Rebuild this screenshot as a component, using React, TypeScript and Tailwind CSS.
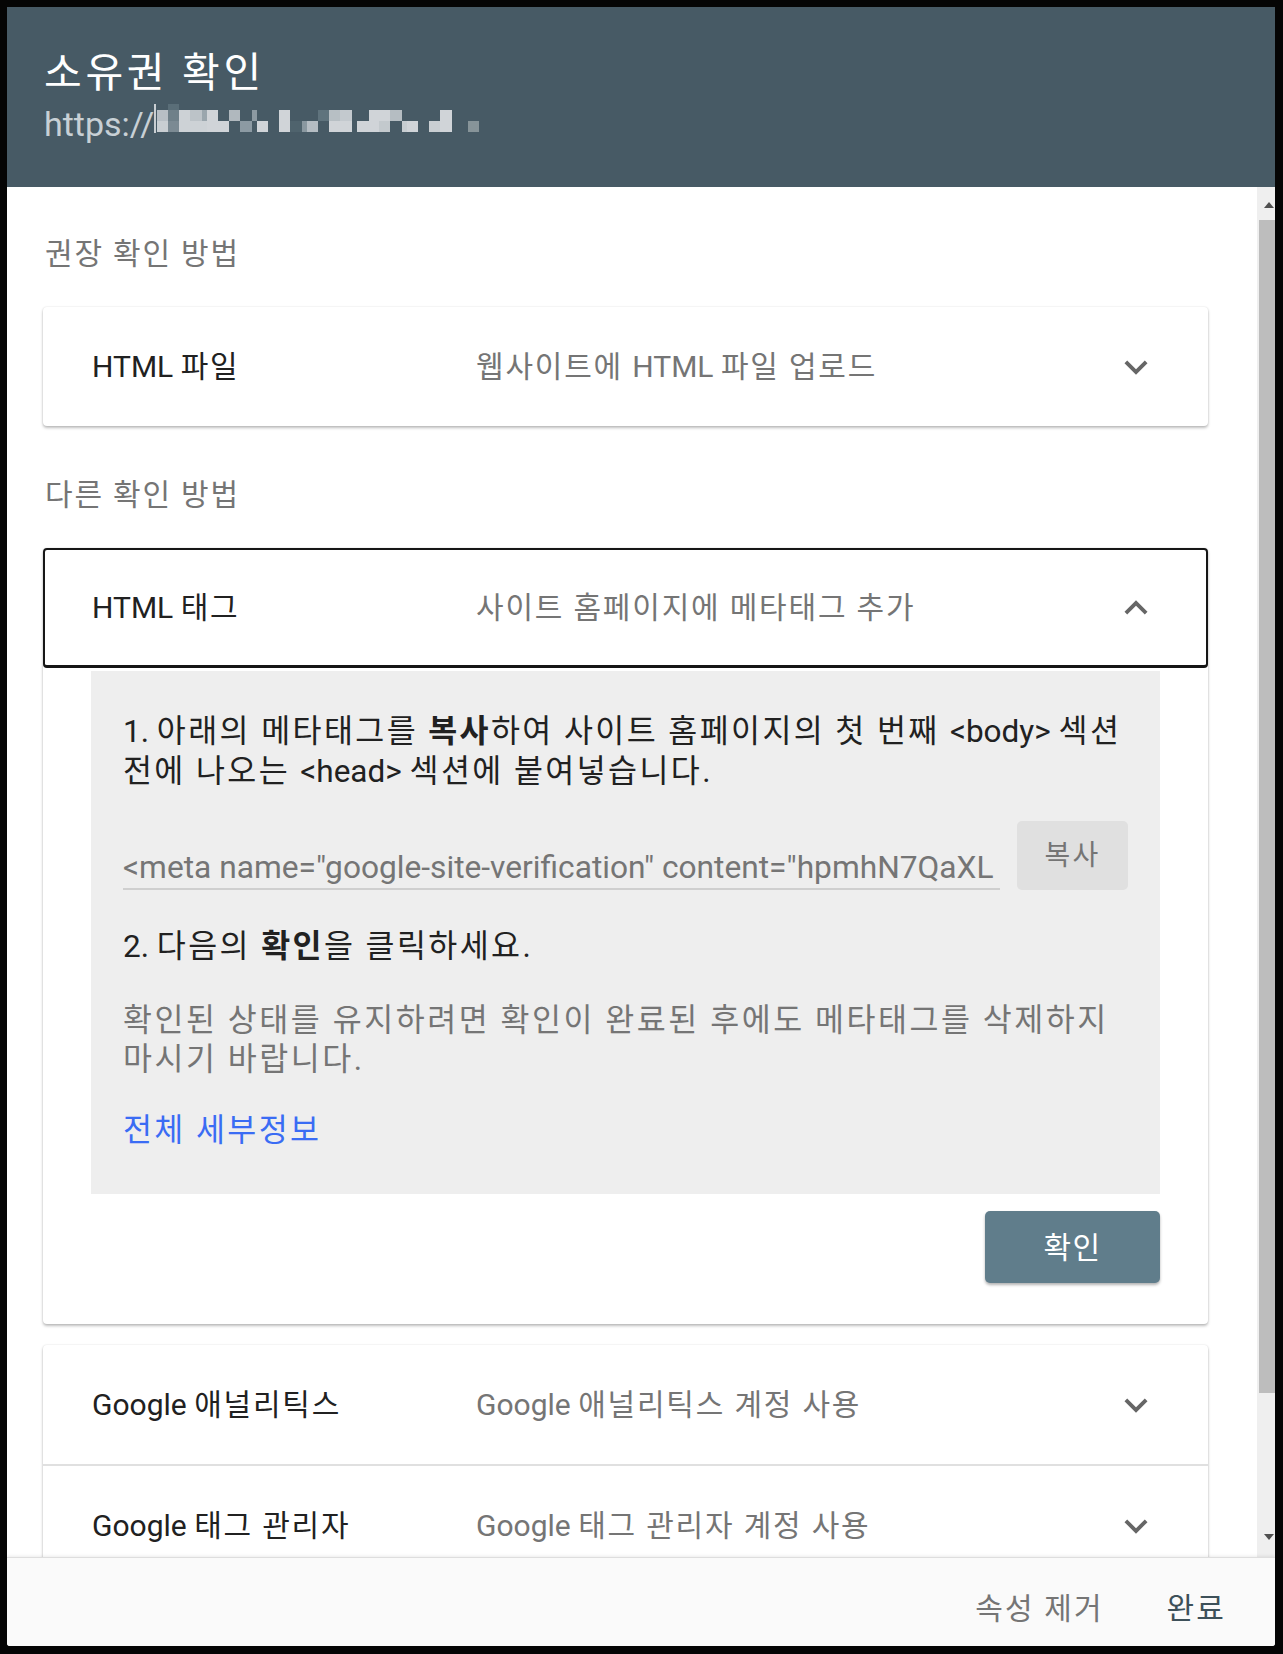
import React from "react";

const Down = () => (
  <svg width="46" height="46" viewBox="0 0 24 24" fill="#666666" className="shrink-0">
    <path d="M16.59 8.59L12 13.17 7.41 8.59 6 10l6 6 6-6z" />
  </svg>
);
const Up = () => (
  <svg width="46" height="46" viewBox="0 0 24 24" fill="#666666" className="shrink-0">
    <path d="M12 8l-6 6 1.41 1.41L12 10.83l4.59 4.58L18 14z" />
  </svg>
);

/* Hangul runs get a little extra tracking to match the reference's looser Korean face */
function K({ t, tr }: { t: string; tr: string }) {
  const parts = t.split(/([가-힣][가-힣 ]*)/);
  return (
    <>
      {parts.map((p, i) =>
        /[가-힣]/.test(p) ? (
          <span key={i} className={tr}>
            {p}
          </span>
        ) : (
          <React.Fragment key={i}>{p}</React.Fragment>
        )
      )}
    </>
  );
}

const ROW_TR = "tracking-[0.06em]";
const BODY_TR = "tracking-[0.076em]";

type R = [number, number, number, number, string];
const blocks: R[] = [
  [157, 3, 103, 30, "#c9ced2"],
  [161, 11, 110, 11, "#b8bfc5"],
  [161, 11, 121, 11, "#c9ced2"],
  [172, 11, 98, 12, "#5a6e78"],
  [172, 11, 110, 11, "#6f8089"],
  [172, 11, 121, 11, "#7b8a93"],
  [183, 11, 110, 22, "#cdd2d6"],
  [194, 12, 110, 11, "#bcc3c8"],
  [194, 12, 121, 11, "#cdd2d6"],
  [206, 5, 110, 11, "#9aa6ad"],
  [206, 5, 121, 11, "#cdd2d6"],
  [211, 11, 110, 22, "#d0d4d8"],
  [222, 11, 121, 11, "#d0d4d8"],
  [233, 11, 110, 11, "#b0b8be"],
  [244, 12, 121, 11, "#8c9aa3"],
  [256, 5, 110, 11, "#8d9aa2"],
  [261, 11, 121, 11, "#d0d4d8"],
  [283, 11, 110, 22, "#d0d4d8"],
  [294, 12, 121, 11, "#4f636d"],
  [306, 5, 121, 11, "#8a98a0"],
  [311, 11, 121, 11, "#b5bdc3"],
  [322, 11, 110, 11, "#5f737d"],
  [333, 11, 110, 11, "#b7bfc4"],
  [333, 11, 121, 11, "#d0d4d8"],
  [344, 12, 110, 11, "#c3c9ce"],
  [344, 12, 121, 11, "#d0d4d8"],
  [361, 12, 121, 11, "#d0d4d8"],
  [373, 10, 110, 22, "#d0d4d8"],
  [383, 11, 110, 11, "#d0d4d8"],
  [383, 11, 121, 11, "#c3c9cd"],
  [394, 12, 110, 11, "#b5bdc2"],
  [406, 5, 121, 11, "#c7cdd1"],
  [411, 11, 121, 11, "#d0d4d8"],
  [433, 11, 121, 11, "#c9ced2"],
  [444, 12, 110, 22, "#d0d4d8"],
  [472, 11, 121, 11, "#879499"],
];

const Mosaic = () => (
  <svg width="330" height="40" viewBox="0 0 330 40" className="shrink-0">
    {blocks.map(([x, w, y, h, c], i) => (
      <rect key={i} x={x - 158} y={y - 104} width={w} height={h} fill={c} />
    ))}
  </svg>
);

function Row({
  label,
  desc,
  up,
  bordered,
}: {
  label: string;
  desc: string;
  up?: boolean;
  bordered?: boolean;
}) {
  return (
    <div
      className={
        bordered
          ? "flex items-center h-[120px] pl-[47px] pr-[47px] border-2 border-b-[3px] border-[#161616] rounded-[4px]"
          : "flex items-center h-[119px] pl-[49px] pr-[49px]"
      }
    >
      <div className="w-[384px] shrink-0 text-[30px] leading-[40px] text-[#212121] whitespace-nowrap">
        <K t={label} tr={ROW_TR} />
      </div>
      <div className="flex-1 text-[30px] leading-[40px] text-[#757575] whitespace-nowrap">
        <K t={desc} tr={ROW_TR} />
      </div>
      {up ? <Up /> : <Down />}
    </div>
  );
}

const cardShadow = "shadow-[0_2px_3px_rgba(0,0,0,0.25),0_0_2px_rgba(0,0,0,0.12)]";

export default function App() {
  return (
    <div className="w-[1283px] h-[1654px] bg-[#050505] pt-[7px] pl-[7px] pr-[8px] pb-[8px] overflow-hidden font-[Roboto,'Noto_Sans_CJK_KR',sans-serif]">
      <div className="flex flex-col h-full bg-white rounded-b-[3px] overflow-hidden">
        {/* Header */}
        <div className="h-[180px] shrink-0 bg-[#475a65] pl-[37px] pt-[42px]">
          <div className="text-[41px] leading-[48px] text-white whitespace-nowrap tracking-[0.09em]">
            소유권 확인
          </div>
          <div className="mt-[7px] flex items-start h-[40px]">
            <span className="text-[34px] leading-[40px] text-[#c8d0d5] whitespace-nowrap">https://</span>
            <Mosaic />
          </div>
        </div>

        {/* Body */}
        <div className="flex-1 min-h-0 flex">
          <div className="flex-1 overflow-hidden pl-[36px] pr-[49px] pt-[47px]">
            <div className="ml-[2px] text-[30px] leading-[40px] text-[#757575] tracking-[0.06em]">
              권장 확인 방법
            </div>
            <div className={"mt-[33px] bg-white rounded-[4px] " + cardShadow}>
              <Row label="HTML 파일" desc="웹사이트에 HTML 파일 업로드" />
            </div>

            <div className="mt-[49px] ml-[2px] text-[30px] leading-[40px] text-[#757575] tracking-[0.06em]">
              다른 확인 방법
            </div>

            <div className={"mt-[33px] bg-white rounded-[4px] " + cardShadow}>
              <Row label="HTML 태그" desc="사이트 홈페이지에 메타태그 추가" up bordered />
              <div className="px-[48px] pt-[3px] pb-[41px]">
                <div className="bg-[#eeeeee] pl-[32px] pr-[32px] pt-[41px] pb-[43px]">
                  <p className="text-[31.5px] leading-[40px] text-[#212121] whitespace-nowrap">
                    <K t="1. 아래의 메타태그를 " tr={BODY_TR} />
                    <b className={"font-bold " + BODY_TR}>복사</b>
                    <K t="하여 사이트 홈페이지의 첫 번째 <body> 섹션" tr={BODY_TR} />
                    <br />
                    <K t="전에 나오는 <head> 섹션에 붙여넣습니다." tr={BODY_TR} />
                  </p>
                  <div className="mt-[29px] flex h-[69px] gap-[17px]">
                    <div className="flex-1 min-w-0 self-end border-b-2 border-[#cfcfcf] overflow-hidden">
                      <div className="text-[31.7px] leading-[40px] text-[#757575] whitespace-nowrap">
                        &lt;meta name="google-site-verification" content="hpmhN7QaXL
                      </div>
                    </div>
                    <div className="w-[111px] h-[69px] shrink-0 bg-[#e0e0e0] rounded-[5px] flex items-center justify-center text-[28px] text-[#757575] tracking-[0.08em]">
                      복사
                    </div>
                  </div>
                  <p className="mt-[37px] text-[31.5px] leading-[40px] text-[#212121] whitespace-nowrap">
                    <K t="2. 다음의 " tr={BODY_TR} />
                    <b className={"font-bold " + BODY_TR}>확인</b>
                    <K t="을 클릭하세요." tr={BODY_TR} />
                  </p>
                  <p className="mt-[34px] text-[31.5px] leading-[39px] text-[#757575] whitespace-nowrap tracking-[0.08em]">
                    확인된 상태를 유지하려면 확인이 완료된 후에도 메타태그를 삭제하지
                    <br />
                    마시기 바랍니다.
                  </p>
                  <div className="mt-[32px] text-[31.5px] leading-[40px] text-[#3a6cf4] tracking-[0.076em]">
                    전체 세부정보
                  </div>
                </div>
                <div className="mt-[17px] flex justify-end">
                  <div className="w-[175px] h-[72px] bg-[#607d8b] rounded-[5px] shadow-[0_2px_3px_rgba(0,0,0,0.3)] flex items-center justify-center text-[30px] text-white tracking-[0.05em]">
                    확인
                  </div>
                </div>
              </div>
            </div>

            <div className={"mt-[21px] bg-white rounded-[4px] " + cardShadow}>
              <Row label="Google 애널리틱스" desc="Google 애널리틱스 계정 사용" />
              <div className="h-[2px] bg-[#e0e0e0]" />
              <Row label="Google 태그 관리자" desc="Google 태그 관리자 계정 사용" />
            </div>
          </div>

          {/* Scrollbar */}
          <div className="w-[18px] shrink-0 bg-[#efefef] flex flex-col">
            <div className="h-[33px] flex justify-end pr-[1px] pt-[15px]">
              <svg width="10" height="6" viewBox="0 0 10 6">
                <path d="M0 6L5 0L10 6Z" fill="#505050" />
              </svg>
            </div>
            <div className="h-[1173px] ml-[2px] bg-[#bdbdbd]" />
            <div className="flex-1" />
            <div className="h-[33px] flex justify-end pr-[1px] pt-[10px]">
              <svg width="10" height="6" viewBox="0 0 10 6">
                <path d="M0 0L10 0L5 6Z" fill="#505050" />
              </svg>
            </div>
          </div>
        </div>

        {/* Footer */}
        <div className="h-[89px] shrink-0 bg-[#fafafa] border-t border-[#dedede] shadow-[0_-1px_3px_rgba(0,0,0,0.08)] flex items-center justify-end gap-[63px] pr-[49px] pt-[13px]">
          <span className="text-[30px] leading-[40px] text-[#757575] tracking-[0.07em]">속성 제거</span>
          <span className="text-[30px] leading-[40px] text-[#3d5059] tracking-[0.07em]">완료</span>
        </div>
      </div>
    </div>
  );
}
